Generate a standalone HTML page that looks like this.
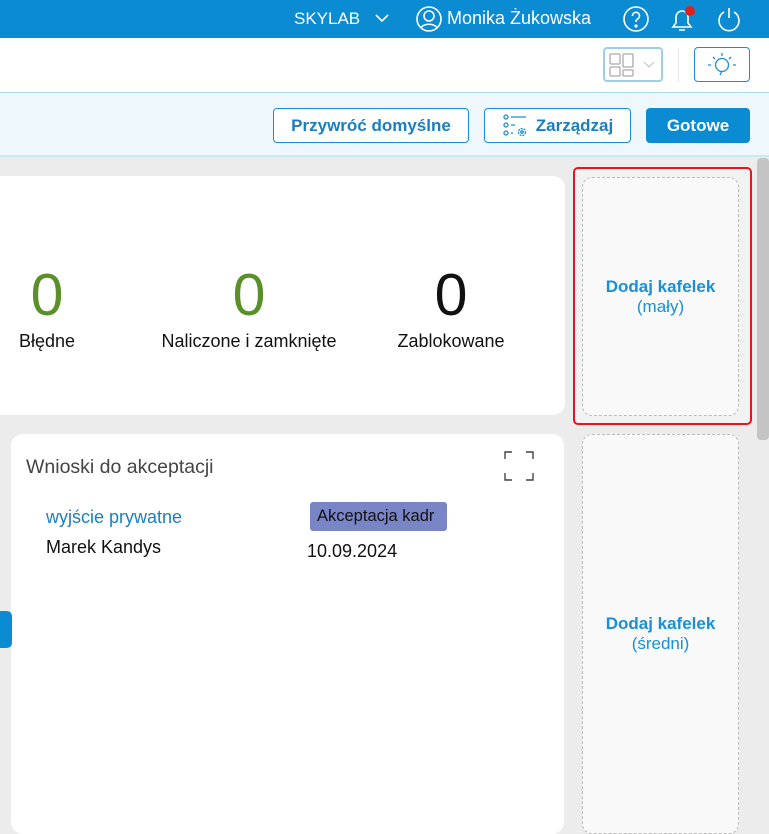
<!DOCTYPE html>
<html><head><meta charset="utf-8"><style>
*{box-sizing:border-box;margin:0;padding:0}
body{width:769px;height:802px;overflow:hidden;background:#ececec;font-family:"Liberation Sans",sans-serif;position:relative}
.a{position:absolute}
.top{left:0;top:0;width:769px;height:38px;background:#0a8bd2;color:#fff;font-size:17px}
.w{left:0;top:38px;width:769px;height:54px;background:#fff}
.lb{left:0;top:92px;width:769px;height:65px;background:#eef7fb;border-top:1px solid #a8dcef;border-bottom:2px solid #cbe9f4}
.btn{border:1px solid #1a8fcf;border-radius:4px;color:#1a7fc0;font-weight:bold;font-size:17px;display:flex;align-items:center;justify-content:center;background:#fff}
.card{background:#fff;border-radius:12px}
.num{font-size:59px;text-align:center;width:240px;line-height:1}
.lab{font-size:18px;text-align:center;width:240px;color:#111}
.dash{border:1px dashed #bbb;border-radius:10px;background:#f9f9f9;color:#1a8fd6;font-size:17px;text-align:center;display:flex;flex-direction:column;justify-content:center}
</style></head><body>
<div class="a top">
<span class="a" style="left:294px;top:9px">SKYLAB</span>
<svg class="a" style="left:375px;top:13px" width="14" height="10"><path d="M1 2l6 6 6-6" stroke="#fff" stroke-width="1.6" fill="none"/></svg>
<svg class="a" style="left:415px;top:5px" width="28" height="28" fill="none" stroke="#fff" stroke-width="1.6"><circle cx="14" cy="14" r="12"/><circle cx="14" cy="11" r="5"/><path d="M6 23c2-5 14-5 16 0"/></svg>
<span class="a" style="left:447px;top:8px;font-size:18px">Monika Żukowska</span>
<svg class="a" style="left:622px;top:5px" width="28" height="28" fill="none" stroke="#fff" stroke-width="1.6"><circle cx="14" cy="14" r="12"/><path d="M10.5 11a3.5 3.5 0 1 1 5 3c-1.5 1-1.5 2-1.5 3"/><circle cx="14" cy="21" r=".8" fill="#fff"/></svg>
<svg class="a" style="left:668px;top:4px" width="30" height="30" fill="none" stroke="#fff" stroke-width="1.6"><path d="M5 23h18l-3-4v-6a6 6 0 0 0-12 0v6z M11 26h6"/><circle cx="22" cy="7" r="5" fill="#e02020" stroke="none"/></svg>
<svg class="a" style="left:715px;top:5px" width="28" height="28" fill="none" stroke="#fff" stroke-width="1.6"><path d="M9 7a10 10 0 1 0 10 0M14 3v10"/></svg>
</div>
<div class="a w">
<div class="a" style="left:603px;top:9px;width:60px;height:35px;border:2px solid #9fcfe6;border-radius:4px"></div>
<svg class="a" style="left:608px;top:14px" width="52" height="26" fill="none" stroke="#aaa" stroke-width="1.3"><rect x="2" y="2" width="10" height="10" rx="1"/><rect x="15" y="2" width="10" height="13" rx="1"/><rect x="2" y="15" width="10" height="9" rx="1"/><rect x="15" y="18" width="10" height="6" rx="1"/><path d="M36 10l5 5 5-5" stroke="#ccc"/></svg>
<div class="a" style="left:678px;top:10px;width:1px;height:34px;background:#e3e3e3"></div>
<div class="a" style="left:694px;top:9px;width:56px;height:35px;border:1px solid #1a8fcf;border-radius:4px"></div>
<svg class="a" style="left:705px;top:12px" width="34" height="30" fill="none" stroke="#1a8fcf" stroke-width="1.3"><circle cx="17" cy="15" r="6.5"/><path d="M17 21l-2 4M17 3v3M8 7l2 2M26 7l-2 2M3 15h3M28 15h3"/></svg>
</div>
<div class="a lb">
<div class="a btn" style="left:273px;top:15px;width:196px;height:35px">Przywróć domyślne</div>
<div class="a btn" style="left:484px;top:15px;width:147px;height:35px"><svg width="30" height="26" fill="none" stroke="#1a8fcf" stroke-width="1.3"><circle cx="4" cy="4" r="2"/><circle cx="4" cy="12" r="2"/><circle cx="4" cy="20" r="2"/><path d="M9 4h15M9 12h4M9 20h2"/><circle cx="20" cy="19" r="3.5" stroke-dasharray="2 1"/><circle cx="20" cy="19" r="1.2"/></svg><span style="margin-left:4px">Zarządzaj</span></div>
<div class="a btn" style="left:646px;top:15px;width:104px;height:35px;background:#0a8bd2;color:#fff;border-color:#0a8bd2">Gotowe</div>
</div>
<div class="a card" style="left:-20px;top:176px;width:585px;height:239px">
<div class="a num" style="left:-53px;top:90px;color:#5a8f2a">0</div>
<div class="a lab" style="left:-53px;top:155px">Błędne</div>
<div class="a num" style="left:149px;top:90px;color:#5a8f2a">0</div>
<div class="a lab" style="left:149px;top:155px">Naliczone i zamknięte</div>
<div class="a num" style="left:351px;top:90px;color:#111">0</div>
<div class="a lab" style="left:351px;top:155px">Zablokowane</div>
</div>
<div class="a card" style="left:11px;top:434px;width:553px;height:400px">
<div class="a" style="left:15px;top:22px;font-size:19.5px;color:#444">Wnioski do akceptacji</div>
<svg class="a" style="left:493px;top:17px" width="30" height="30" fill="none" stroke="#444" stroke-width="1.4"><path d="M1 8V1h7M22 1h7v7M29 22v7h-7M8 29H1v-7"/></svg>
<div class="a" style="left:35px;top:73px;font-size:18px;color:#1a80c0">wyjście prywatne</div>
<div class="a" style="left:35px;top:103px;font-size:18px;color:#111">Marek Kandys</div>
<div class="a" style="left:299px;top:68px;width:137px;height:29px;background:#7a85c8;border-radius:3px;font-size:16.5px;color:#111;padding:5px 0 0 7px;white-space:nowrap">Akceptacja kadr</div>
<div class="a" style="left:296px;top:107px;font-size:18px;color:#111">10.09.2024</div>
</div>
<div class="a" style="left:0;top:611px;width:12px;height:37px;background:#0a8bd2;border-radius:0 5px 5px 0"></div>
<div class="a" style="left:573px;top:167px;width:179px;height:258px;border:2px solid #e8161b;border-radius:5px;background:#f2f2f2"></div>
<div class="a dash" style="left:582px;top:177px;width:157px;height:239px"><b style="font-weight:bold">Dodaj kafelek</b><span>(mały)</span></div>
<div class="a dash" style="left:582px;top:434px;width:157px;height:400px"><b>Dodaj kafelek</b><span>(średni)</span></div>
<div class="a" style="left:757px;top:158px;width:12px;height:282px;background:#c4c4c4;border-radius:4px"></div>
</body></html>
